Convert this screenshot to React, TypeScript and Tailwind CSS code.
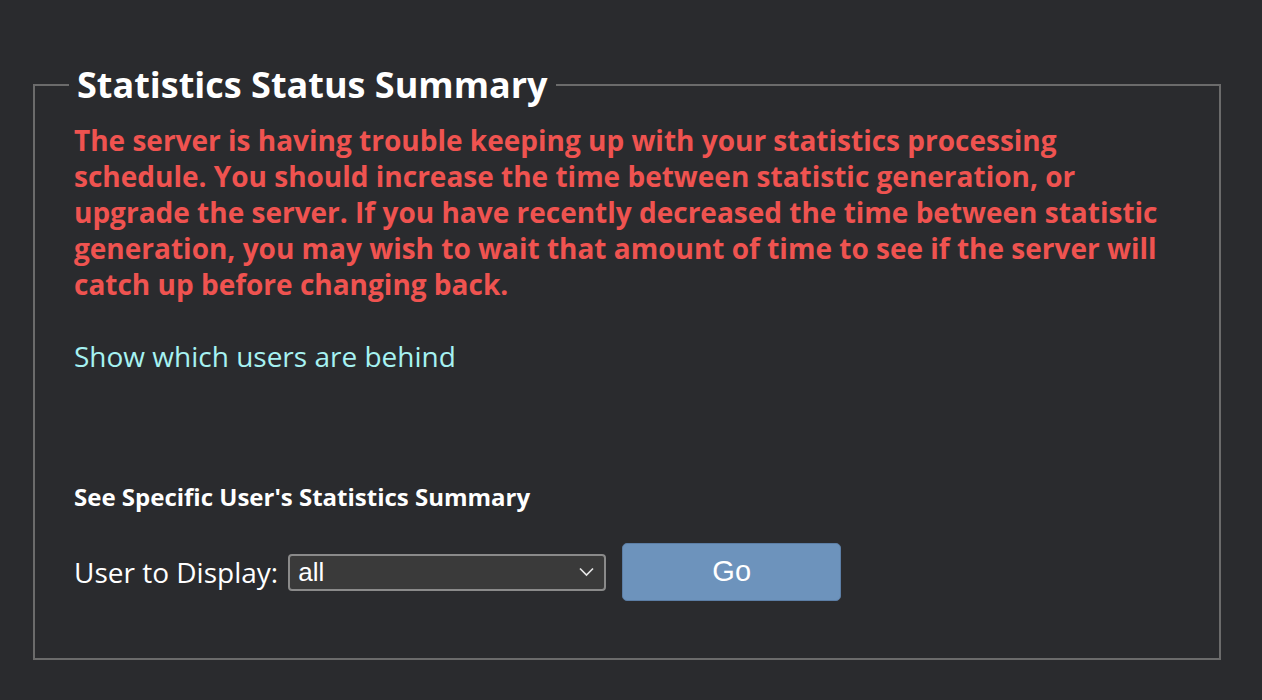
import React from 'react';

export default function App() {
  return (
    <div className="min-h-[700px] w-full bg-[#2a2b2e] pt-[61px] font-['Open_Sans',sans-serif]">
      <fieldset className="ml-[33px] w-[1188px] border-2 border-[#6b6b6b] pl-[39px] pr-[20px] pb-[57px]">
        <legend className="-ml-[5px] px-[8px] text-[36px] font-bold leading-[48px] text-white">
          Statistics Status Summary
        </legend>

        <p className="mt-[13px] text-[28px] font-bold leading-[36px] text-[#ef5350]">
          The server is having trouble keeping up with your statistics processing
          <br />
          schedule. You should increase the time between statistic generation, or
          <br />
          upgrade the server. If you have recently decreased the time between statistic
          <br />
          generation, you may wish to wait that amount of time to see if the server will
          <br />
          catch up before changing back.
        </p>

        <a href="#" className="mt-[36px] block text-[28px] leading-[36px] text-[#a6f2f2]">
          Show which users are behind
        </a>

        <h3 className="mt-[107px] text-[24px] font-bold leading-[32px] text-white">
          See Specific User's Statistics Summary
        </h3>

        <div className="mt-[30px] flex items-center">
          <span className="text-[28px] leading-[36px] text-white">User to Display:</span>
          <div className="relative ml-[10px] flex h-[37px] w-[318px] items-center rounded-[4px] border-2 border-[#8a8a8a] bg-[#3a3a3a] pl-[8px]">
            <span className="font-['Liberation_Sans',Arial,sans-serif] text-[26px] leading-[30px] text-white">all</span>
            <svg className="absolute right-[10px] top-1/2 -translate-y-1/2" width="15" height="10" viewBox="0 0 15 10" fill="none">
              <path d="M1 1.5 7.5 8 14 1.5" stroke="#e5e5e5" strokeWidth="1.7" />
            </svg>
          </div>
          <button className="ml-[16px] h-[58px] w-[219px] rounded-[5px] border border-[#5c7ea5] bg-[#6d93bc] font-['Liberation_Sans',Arial,sans-serif] text-[29px] text-white">
            Go
          </button>
        </div>
      </fieldset>
    </div>
  );
}
